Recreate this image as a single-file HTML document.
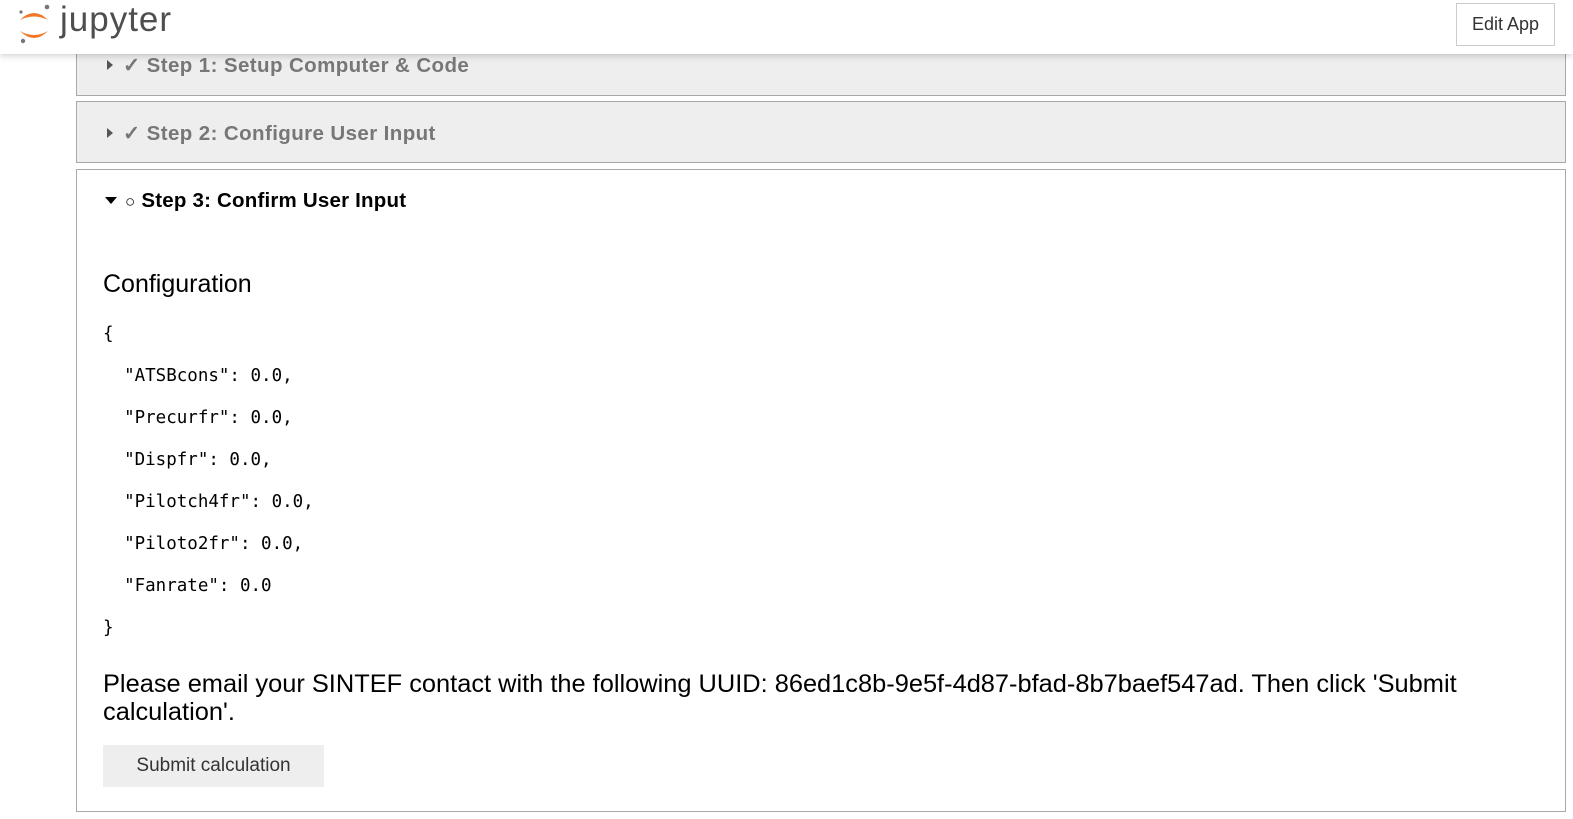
<!DOCTYPE html>
<html><head><style>
body{margin:0;width:1573px;height:819px;overflow:hidden;background:#fff;font-family:"Liberation Sans",Arial,sans-serif;position:relative}
#hdr{position:absolute;left:0;top:0;width:1573px;height:54px;background:#fff;box-shadow:0 2px 6px rgba(0,0,0,.18);z-index:5}
.box{position:absolute;left:76px;width:1490px;border:1px solid #a9a9a9;box-sizing:border-box}
.grey{background:#eeeeee}
.title{position:absolute;left:30px;font-size:20.5px;font-weight:bold;color:#777;letter-spacing:0.4px}
.tri{display:inline-block;width:0;height:0;border-top:5px solid transparent;border-bottom:5px solid transparent;border-left:6px solid #555;margin-right:10px;vertical-align:2px}
.code{position:absolute;left:26px;font-family:"DejaVu Sans Mono","Liberation Mono",monospace;font-size:17.5px;color:#000;white-space:pre;line-height:42px}
</style></head><body>
<div id="hdr">
<svg style="position:absolute;left:17px;top:3px" width="36" height="42" viewBox="0 0 36 42">
<path d="M3 17 Q17 3 31 17 Q17 10 3 17Z" fill="#f37726"/>
<path d="M3 28 Q17 42 31 28 Q17 36 3 28Z" fill="#f37726"/>
<circle cx="30" cy="4" r="2.3" fill="#767677"/><circle cx="4" cy="9" r="1.6" fill="#767677"/><circle cx="6" cy="38" r="2.2" fill="#767677"/>
</svg>
<div style="position:absolute;left:60px;top:0px;font-size:35px;color:#4e4e4e;letter-spacing:1px">jupyter</div>
<div style="position:absolute;left:1456px;top:3px;width:99px;height:43px;border:1px solid #ccc;box-sizing:border-box;font-size:18px;color:#333;text-align:center;line-height:41px">Edit App</div>
</div>
<div class="box grey" style="top:20px;height:76px"><div class="title" style="top:32px"><span class="tri"></span>✓ Step 1: Setup Computer &amp; Code</div></div>
<div class="box grey" style="top:101px;height:62px"><div class="title" style="top:19px"><span class="tri"></span>✓ Step 2: Configure User Input</div></div>
<div class="box" style="top:169px;height:643px">
<div class="title" style="top:19px;color:#000;left:28px;letter-spacing:0.2px"><span style="display:inline-block;border-left:6px solid transparent;border-right:6px solid transparent;border-top:7px solid #000;margin-right:8px;vertical-align:3px"></span><span style="font-weight:normal;font-size:17px">○</span> Step 3: Confirm User Input</div>
<div style="position:absolute;left:26px;top:100px;font-size:25px;color:#000">Configuration</div>
<div class="code" style="top:143px">{
  "ATSBcons": 0.0,
  "Precurfr": 0.0,
  "Dispfr": 0.0,
  "Pilotch4fr": 0.0,
  "Piloto2fr": 0.0,
  "Fanrate": 0.0
}</div>
<div style="position:absolute;left:26px;top:500px;width:1420px;font-size:25.4px;line-height:28px;color:#000">Please email your SINTEF contact with the following UUID: 86ed1c8b-9e5f-4d87-bfad-8b7baef547ad. Then click 'Submit calculation'.</div>
<div style="position:absolute;left:26px;top:575px;width:221px;height:42px;background:#eeeeee;font-size:19px;color:#333;text-align:center;line-height:42px">Submit calculation</div>
</div>
</body></html>
